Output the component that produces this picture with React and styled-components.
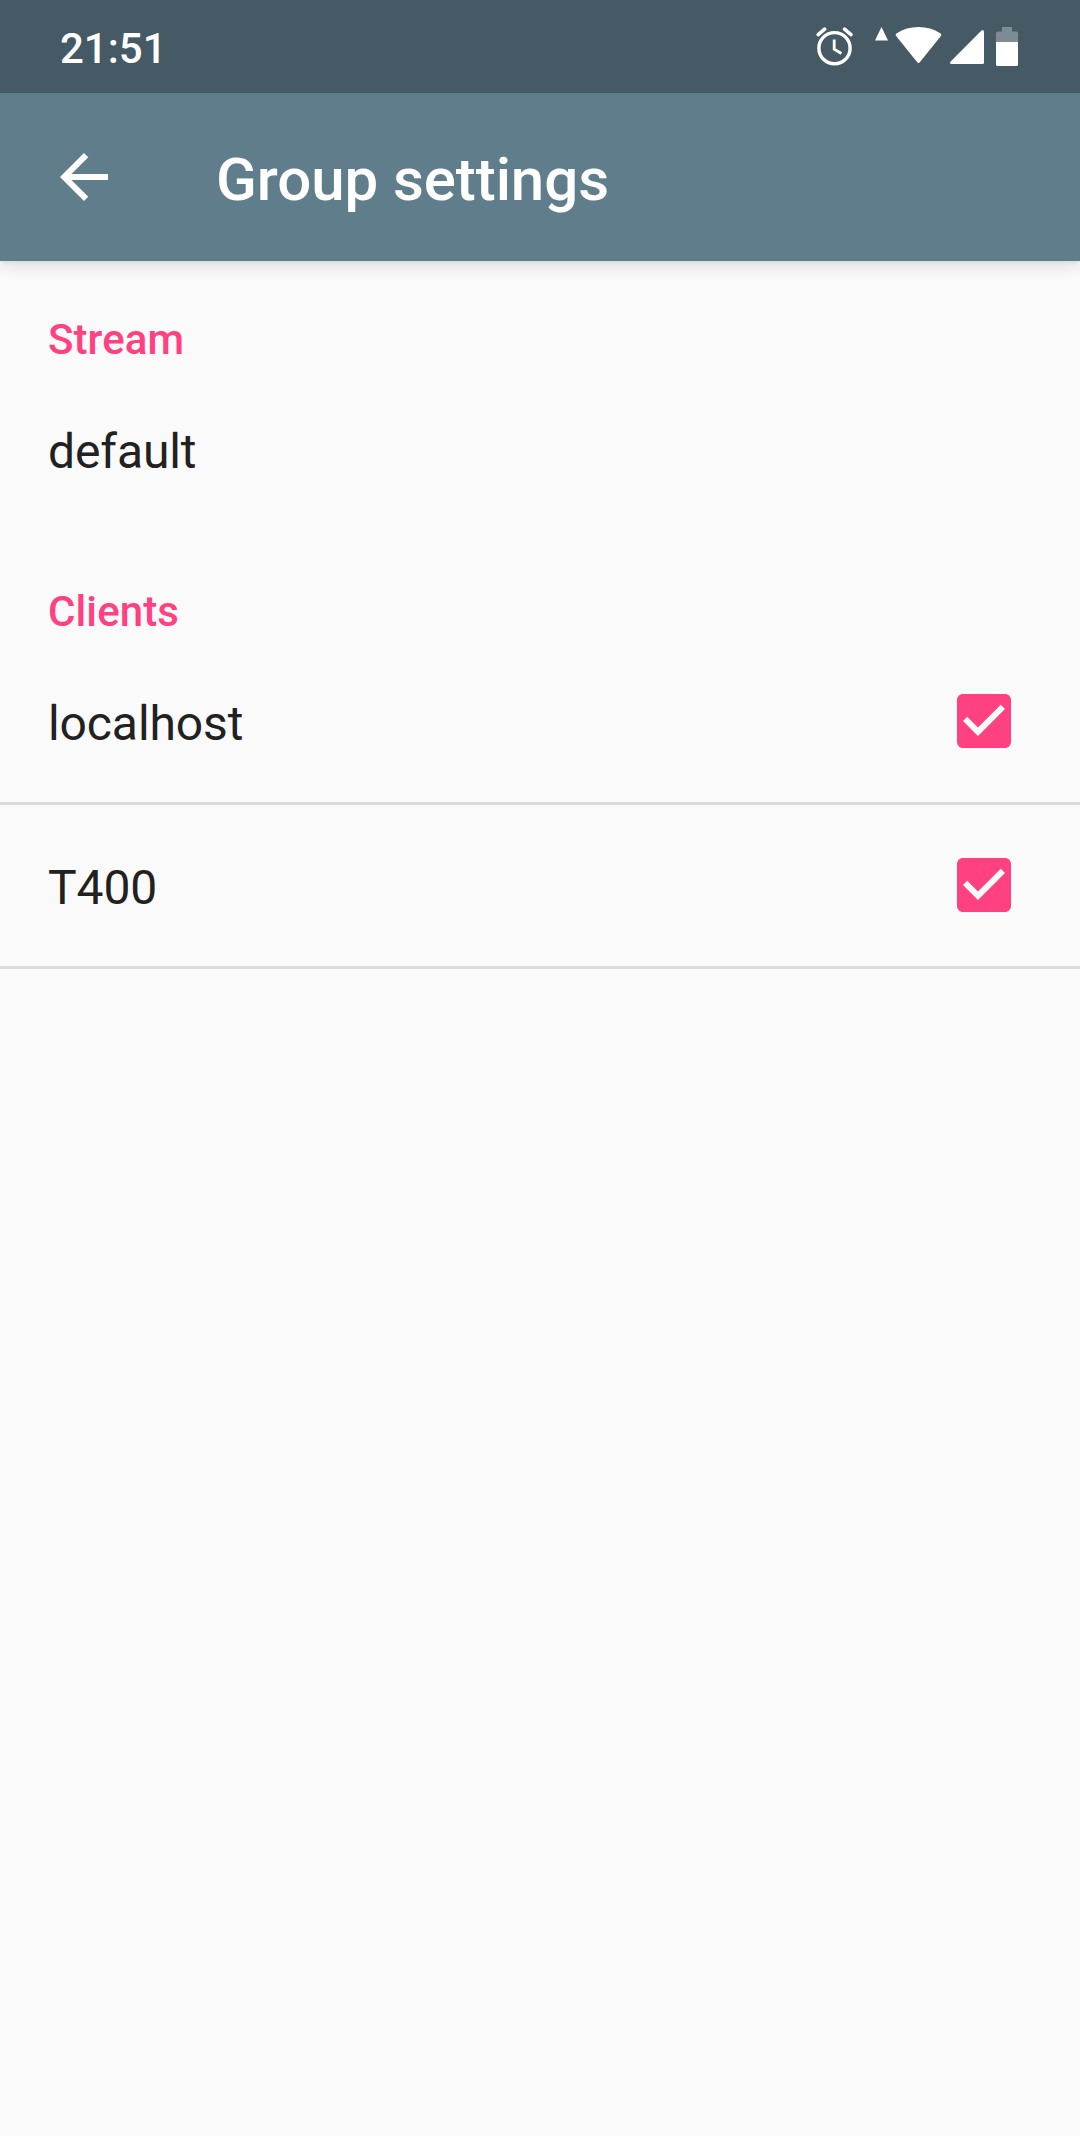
import React, { useState } from "react";
import styled, { createGlobalStyle } from "styled-components";

const GlobalStyle = createGlobalStyle`
  * { box-sizing: border-box; }
  body { margin: 0; background: #fafafa; }
`;

const Screen = styled.div`
  display: flex;
  flex-direction: column;
  width: 1080px;
  min-height: 2136px;
  background: #fafafa;
  font-family: Roboto, "Noto Sans", sans-serif;
  color: #212121;
`;

const StatusBar = styled.header`
  display: flex;
  justify-content: space-between;
  align-items: flex-start;
  height: 93px;
  padding: 27px 62px 0 60px;
  background: #455a64;
  z-index: 1;
  position: relative;
`;

const Clock = styled.time`
  font-size: 42px;
  font-weight: 500;
  line-height: 43px;
  color: #fff;
`;

const StatusIcons = styled.div`
  display: flex;
  align-items: flex-start;
`;

const StatusIcon = styled.svg`
  display: block;
  flex: none;
  width: ${(p) => p.$w}px;
  height: 40px;
  margin-left: ${(p) => p.$gap || 0}px;
  fill: #fff;
`;

const Toolbar = styled.div`
  display: flex;
  align-items: center;
  gap: 96px;
  height: 168px;
  padding: 0 48px;
  background: #607d8b;
  box-shadow: 0 6px 14px rgba(0, 0, 0, 0.1), 0 1px 4px rgba(0, 0, 0, 0.07);
`;

const BackButton = styled.button`
  display: flex;
  padding: 0;
  border: 0;
  background: none;
  svg { display: block; width: 72px; height: 72px; fill: #fff; }
`;

const Title = styled.h1`
  margin: 0;
  padding-top: 5px;
  font-size: 60px;
  font-weight: 500;
  line-height: 71px;
  letter-spacing: -0.07px;
  color: #fff;
`;

const Settings = styled.main`
  display: flex;
  flex-direction: column;
  gap: 51px;
  padding-top: 48px;
`;

const Section = styled.section`
  display: flex;
  flex-direction: column;
`;

const SectionTitle = styled.h2`
  margin: 0;
  padding: 1px 0 0 48px;
  font-size: 42px;
  font-weight: 500;
  line-height: 59px;
  letter-spacing: 0.1px;
  color: #ff4081;
`;

const Row = styled.label`
  display: flex;
  align-items: center;
  justify-content: space-between;
  height: ${(p) => (p.$divided ? 164 : 161)}px;
  padding: 0 60px 1px 48px;
  border-bottom: ${(p) => (p.$divided ? "3px solid #dbdbdb" : "0")};
`;

const RowText = styled.span`
  padding-top: 5px;
  font-size: 48px;
  line-height: 57px;
  letter-spacing: -0.1px;
`;

const Check = styled.svg`
  display: block;
  width: 72px;
  height: 72px;
  fill: #ff4081;
`;

const HiddenInput = styled.input`
  display: none;
`;

function AlarmIcon() {
  return (
    <StatusIcon $w={38} viewBox="0 0 38 40">
      <circle cx="18.5" cy="21.2" r="15.6" fill="none" stroke="#fff" strokeWidth="3.4" />
      <path d="M18.2 12.5v9.6l7.2 4.4" fill="none" stroke="#fff" strokeWidth="2.8" />
      <path d="M2.2 7.6 8.6 2.2M35 7.6 28.600 2.2" stroke="#fff" strokeWidth="3.6" strokeLinecap="round" />
    </StatusIcon>
  );
}

function WifiIcon() {
  return (
    <StatusIcon $w={68} $gap={20} viewBox="0 0 68 40">
      <path d="M7.5 0 14 13.5H1z" />
      <path d="M22.3 9.2Q20.8 7.6 22.8 6.2C29 2 36.500 0 44.500 0S60 2 66.200 6.200Q68.200 7.600 66.700 9.200L46 35Q44.500 36.800 43 35Z" />
    </StatusIcon>
  );
}

function SignalIcon() {
  return (
    <StatusIcon $w={34} $gap={8} viewBox="0 0 34 40">
      <path d="M34 4.500V35.500Q34 37 32.500 37H1.500Q-.8 36.500.7 34.600L31.500 3.500Q33.500 2 34 4.500Z" />
    </StatusIcon>
  );
}

function BatteryIcon() {
  return (
    <StatusIcon $w={22} $gap={12} viewBox="0 0 22 40">
      <path d="M6 0H16V4.500H20.500Q22 4.500 22 6V15H0V6Q0 4.500 1.500 4.500H6Z" opacity=".3" />
      <path d="M0 15H22V37.500Q22 39 20.500 39H1.500Q0 39 0 37.500Z" />
    </StatusIcon>
  );
}

function CheckRow({ name }) {
  const [checked, setChecked] = useState(true);
  return (
    <Row $divided>
      <RowText>{name}</RowText>
      <HiddenInput type="checkbox" checked={checked} onChange={() => setChecked(!checked)} />
      <Check viewBox="0 0 24 24">
        {checked ? (
          <path d="M19 3H5c-1.11 0-2 .9-2 2v14c0 1.1.89 2 2 2h14c1.11 0 2-.9 2-2V5c0-1.1-.89-2-2-2zm-9 14l-5-5 1.41-1.41L10 14.17l7.59-7.59L19 8l-9 9z" />
        ) : (
          <path d="M19 5v14H5V5h14m0-2H5c-1.1 0-2 .9-2 2v14c0 1.1.9 2 2 2h14c1.1 0 2-.9 2-2V5c0-1.1-.9-2-2-2z" />
        )}
      </Check>
    </Row>
  );
}

const clients = ["localhost", "T400"];

export default function App() {
  return (
    <Screen>
      <GlobalStyle />
      <StatusBar>
        <Clock>21:51</Clock>
        <StatusIcons>
          <AlarmIcon />
          <WifiIcon />
          <SignalIcon />
          <BatteryIcon />
        </StatusIcons>
      </StatusBar>
      <Toolbar>
        <BackButton aria-label="Back">
          <svg viewBox="0 0 24 24">
            <path d="M20 11H7.830l5.590-5.590L12 4l-8 8 8 8 1.410-1.410L7.830 13H20v-2z" />
          </svg>
        </BackButton>
        <Title>Group settings</Title>
      </Toolbar>
      <Settings>
        <Section>
          <SectionTitle>Stream</SectionTitle>
          <Row as="div">
            <RowText>default</RowText>
          </Row>
        </Section>
        <Section>
          <SectionTitle>Clients</SectionTitle>
          {clients.map((name) => (
            <CheckRow key={name} name={name} />
          ))}
        </Section>
      </Settings>
    </Screen>
  );
}
